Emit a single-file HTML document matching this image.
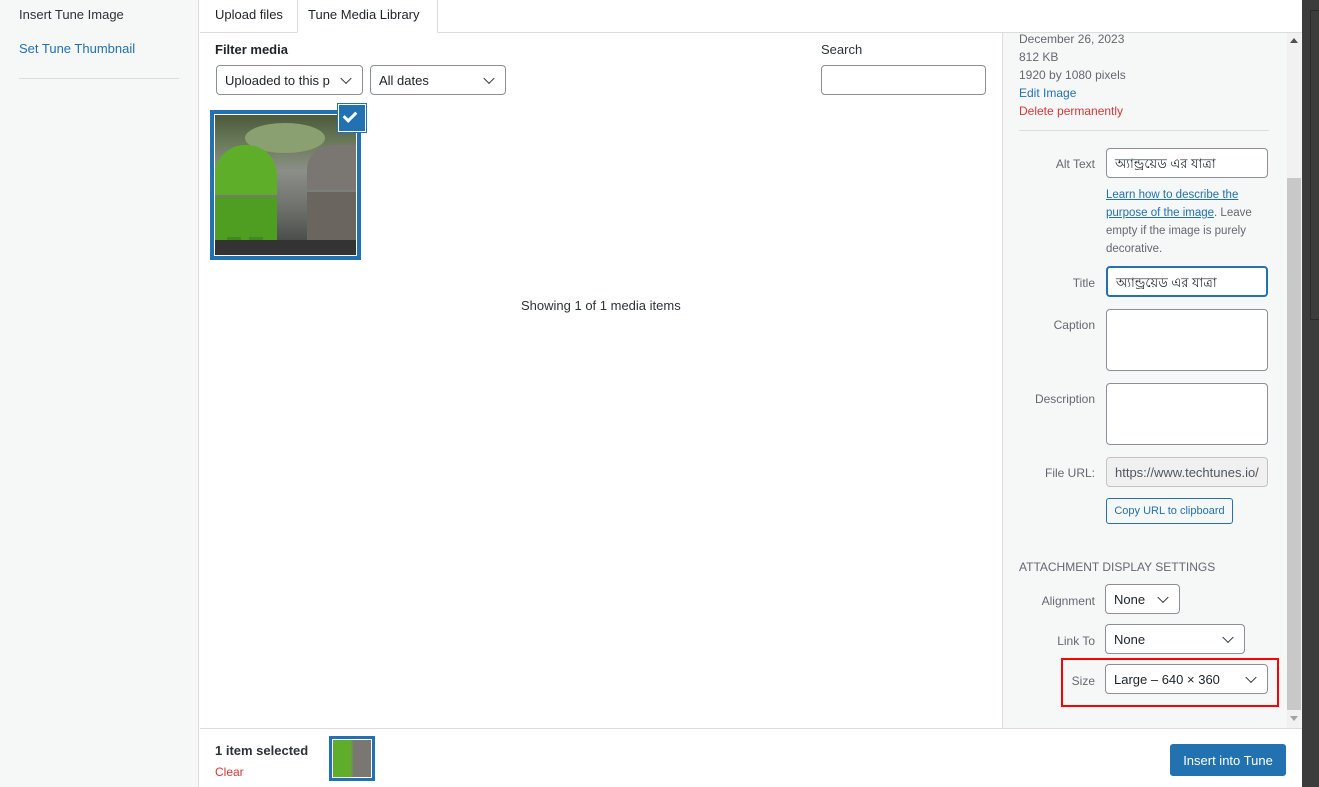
<!DOCTYPE html>
<html><head><meta charset="utf-8"><style>
*{box-sizing:border-box;margin:0;padding:0}
body{width:1319px;height:787px;position:relative;overflow:hidden;font-family:"Liberation Sans",sans-serif;font-size:13px;color:#1d2327;background:#fff}
.a{position:absolute}
.lbl{position:absolute;text-align:right;color:#646970;font-size:12px}
.inp{position:absolute;background:#fff;border:1px solid #8c8f94;border-radius:4px;font-size:13px;padding:0 8px;display:flex;align-items:center;white-space:nowrap;overflow:hidden}
.bn{padding-top:5px}
.sel::after{content:"";position:absolute;right:12px;top:50%;width:7px;height:7px;border-right:1.6px solid #2c3338;border-bottom:1.6px solid #2c3338;transform:translateY(-70%) rotate(45deg)}
.meta{position:absolute;left:1019px;font-size:12px;color:#646970}
</style></head><body>
<div class="a" style="left:0;top:0;width:199px;height:787px;background:#f6f7f7;border-right:1px solid #dcdcde"></div>
<div class="a" style="left:19px;top:7px;font-size:13px;color:#2c3338">Insert Tune Image</div>
<div class="a" style="left:19px;top:41px;font-size:13px;color:#2271b1">Set Tune Thumbnail</div>
<div class="a" style="left:19px;top:78px;width:160px;height:1px;background:#dcdcde"></div>
<div class="a" style="left:200px;top:32px;width:1102px;height:1px;background:#dcdcde"></div>
<div class="a" style="left:215px;top:7px;color:#1d2327">Upload files</div>
<div class="a" style="left:297px;top:0;width:141px;height:33px;background:#fff;border:1px solid #dcdcde;border-top:0;border-bottom:1px solid #fff"></div>
<div class="a" style="left:308px;top:7px;color:#1d2327">Tune Media Library</div>
<div class="a" style="left:215px;top:42px;font-weight:bold;font-size:13px">Filter media</div>
<div class="inp sel" style="left:216px;top:65px;width:147px;height:30px;padding-right:26px">Uploaded to this p</div>
<div class="inp sel" style="left:370px;top:65px;width:136px;height:30px">All dates</div>
<div class="a" style="left:821px;top:42px;color:#2c3338;font-size:13px">Search</div>
<div class="inp" style="left:821px;top:65px;width:165px;height:30px"></div>
<div class="a" style="left:210px;top:110px;width:151px;height:150px;background:#2271b1"></div>
<div class="a" style="left:214px;top:114px;width:143px;height:142px;border:1px solid #fff;overflow:hidden;background:linear-gradient(180deg,#4a5a3a 0%,#6b7a5a 20%,#8b8f88 40%,#6a6c68 70%,#3a3d3a 100%)">
 <div class="a" style="left:30px;top:8px;width:80px;height:30px;border-radius:50%;background:#8aa070"></div>
 <div class="a" style="left:0;top:30px;width:62px;height:50px;border-radius:30px 30px 0 0;background:#5fae2a"></div>
 <div class="a" style="left:0;top:82px;width:62px;height:45px;background:#4f9e22"></div>
 <div class="a" style="left:12px;top:122px;width:14px;height:18px;background:#3f8a1a;border-radius:0 0 6px 6px"></div>
 <div class="a" style="left:34px;top:122px;width:14px;height:18px;background:#3f8a1a;border-radius:0 0 6px 6px"></div>
 <div class="a" style="left:92px;top:30px;width:51px;height:45px;border-radius:25px 0 0 0;background:#7a7672"></div>
 <div class="a" style="left:92px;top:77px;width:51px;height:50px;background:#6b6560"></div>
 <div class="a" style="left:0;top:125px;width:143px;height:17px;background:#333"></div>
</div>
<div class="a" style="left:338px;top:104px;width:28px;height:28px;background:#2271b1;border:1px solid #fff;box-shadow:0 0 0 1px #2271b1"></div>
<div class="a" style="left:346px;top:109px;width:8px;height:13px;border-right:3px solid #fff;border-bottom:3px solid #fff;transform:rotate(45deg)"></div>
<div class="a" style="left:521px;top:298px;color:#2c3338">Showing 1 of 1 media items</div>
<div class="a" style="left:1002px;top:33px;width:300px;height:695px;background:#f6f7f7;border-left:1px solid #dcdcde"></div>
<div class="a" style="left:1287px;top:33px;width:14px;height:695px;background:#f1f1f1"></div>
<div class="a" style="left:1287px;top:178px;width:14px;height:532px;background:#c8c8c8"></div>
<div class="a" style="left:1290px;top:38px;border:4px solid transparent;border-bottom:5px solid #505050;border-top:0"></div>
<div class="a" style="left:1290px;top:716px;border:4px solid transparent;border-top:5px solid #a3a3a3;border-bottom:0"></div>
<div class="meta" style="top:32px">December 26, 2023</div>
<div class="meta" style="top:50px">812 KB</div>
<div class="meta" style="top:68px">1920 by 1080 pixels</div>
<div class="meta" style="top:86px;color:#2271b1">Edit Image</div>
<div class="meta" style="top:104px;color:#d63638">Delete permanently</div>
<div class="a" style="left:1019px;top:130px;width:250px;height:1px;background:#dcdcde"></div>
<div class="lbl" style="left:1010px;width:85px;top:157px">Alt Text</div>
<div class="inp bn" style="left:1106px;top:148px;width:162px;height:30px">অ্যান্ড্রয়েড এর যাত্রা</div>
<div class="a" style="left:1106px;top:186px;width:165px;font-size:11.5px;line-height:18px;color:#646970"><span style="color:#2271b1;text-decoration:underline">Learn how to describe the purpose of the image</span>. Leave empty if the image is purely decorative.</div>
<div class="lbl" style="left:1010px;width:85px;top:276px">Title</div>
<div class="inp bn" style="left:1106px;top:266px;width:162px;height:31px;border:2px solid #2271b1">অ্যান্ড্রয়েড এর যাত্রা</div>
<div class="lbl" style="left:1010px;width:85px;top:318px">Caption</div>
<div class="inp" style="left:1106px;top:309px;width:162px;height:62px"></div>
<div class="lbl" style="left:1010px;width:85px;top:392px">Description</div>
<div class="inp" style="left:1106px;top:383px;width:162px;height:62px"></div>
<div class="lbl" style="left:1010px;width:85px;top:466px">File URL:</div>
<div class="inp" style="left:1106px;top:457px;width:162px;height:30px;background:#f0f0f1;border-color:#c3c4c7;color:#50575e">https://www.techtunes.io/</div>
<div class="a" style="left:1106px;top:498px;width:127px;height:26px;border:1px solid #2271b1;border-radius:3px;color:#2271b1;font-size:11px;display:flex;align-items:center;justify-content:center;background:#f6f7f7">Copy URL to clipboard</div>
<div class="a" style="left:1019px;top:560px;font-size:12px;color:#646970">ATTACHMENT DISPLAY SETTINGS</div>
<div class="lbl" style="left:1010px;width:85px;top:594px">Alignment</div>
<div class="inp sel" style="left:1105px;top:584px;width:75px;height:30px">None</div>
<div class="lbl" style="left:1010px;width:85px;top:634px">Link To</div>
<div class="inp sel" style="left:1105px;top:624px;width:140px;height:30px">None</div>
<div class="a" style="left:1061px;top:658px;width:218px;height:49px;border:2px solid #f00"></div>
<div class="lbl" style="left:1010px;width:85px;top:674px">Size</div>
<div class="inp sel" style="left:1105px;top:664px;width:163px;height:30px">Large – 640 × 360</div>
<div class="a" style="left:200px;top:728px;width:1102px;height:1px;background:#dcdcde"></div>
<div class="a" style="left:215px;top:743px;font-weight:bold;font-size:13px;color:#2c3338">1 item selected</div>
<div class="a" style="left:215px;top:765px;font-size:12px;color:#d63638">Clear</div>
<div class="a" style="left:329px;top:736px;width:46px;height:45px;background:#2271b1;padding:3px"><div style="width:100%;height:100%;border:1px solid #fff;background:linear-gradient(90deg,#5fae2a 45%,#7a7672 55%)"></div></div>
<div class="a" style="left:1170px;top:744px;width:116px;height:32px;background:#2271b1;border-radius:3px;color:#fff;font-size:13px;display:flex;align-items:center;justify-content:center">Insert into Tune</div>
<div class="a" style="left:1302px;top:0;width:17px;height:787px;background:#3c3c3c"></div>
<div class="a" style="left:1310px;top:10px;width:9px;height:310px;border:1px solid #2a2a2a;border-right:0"></div>
</body></html>
